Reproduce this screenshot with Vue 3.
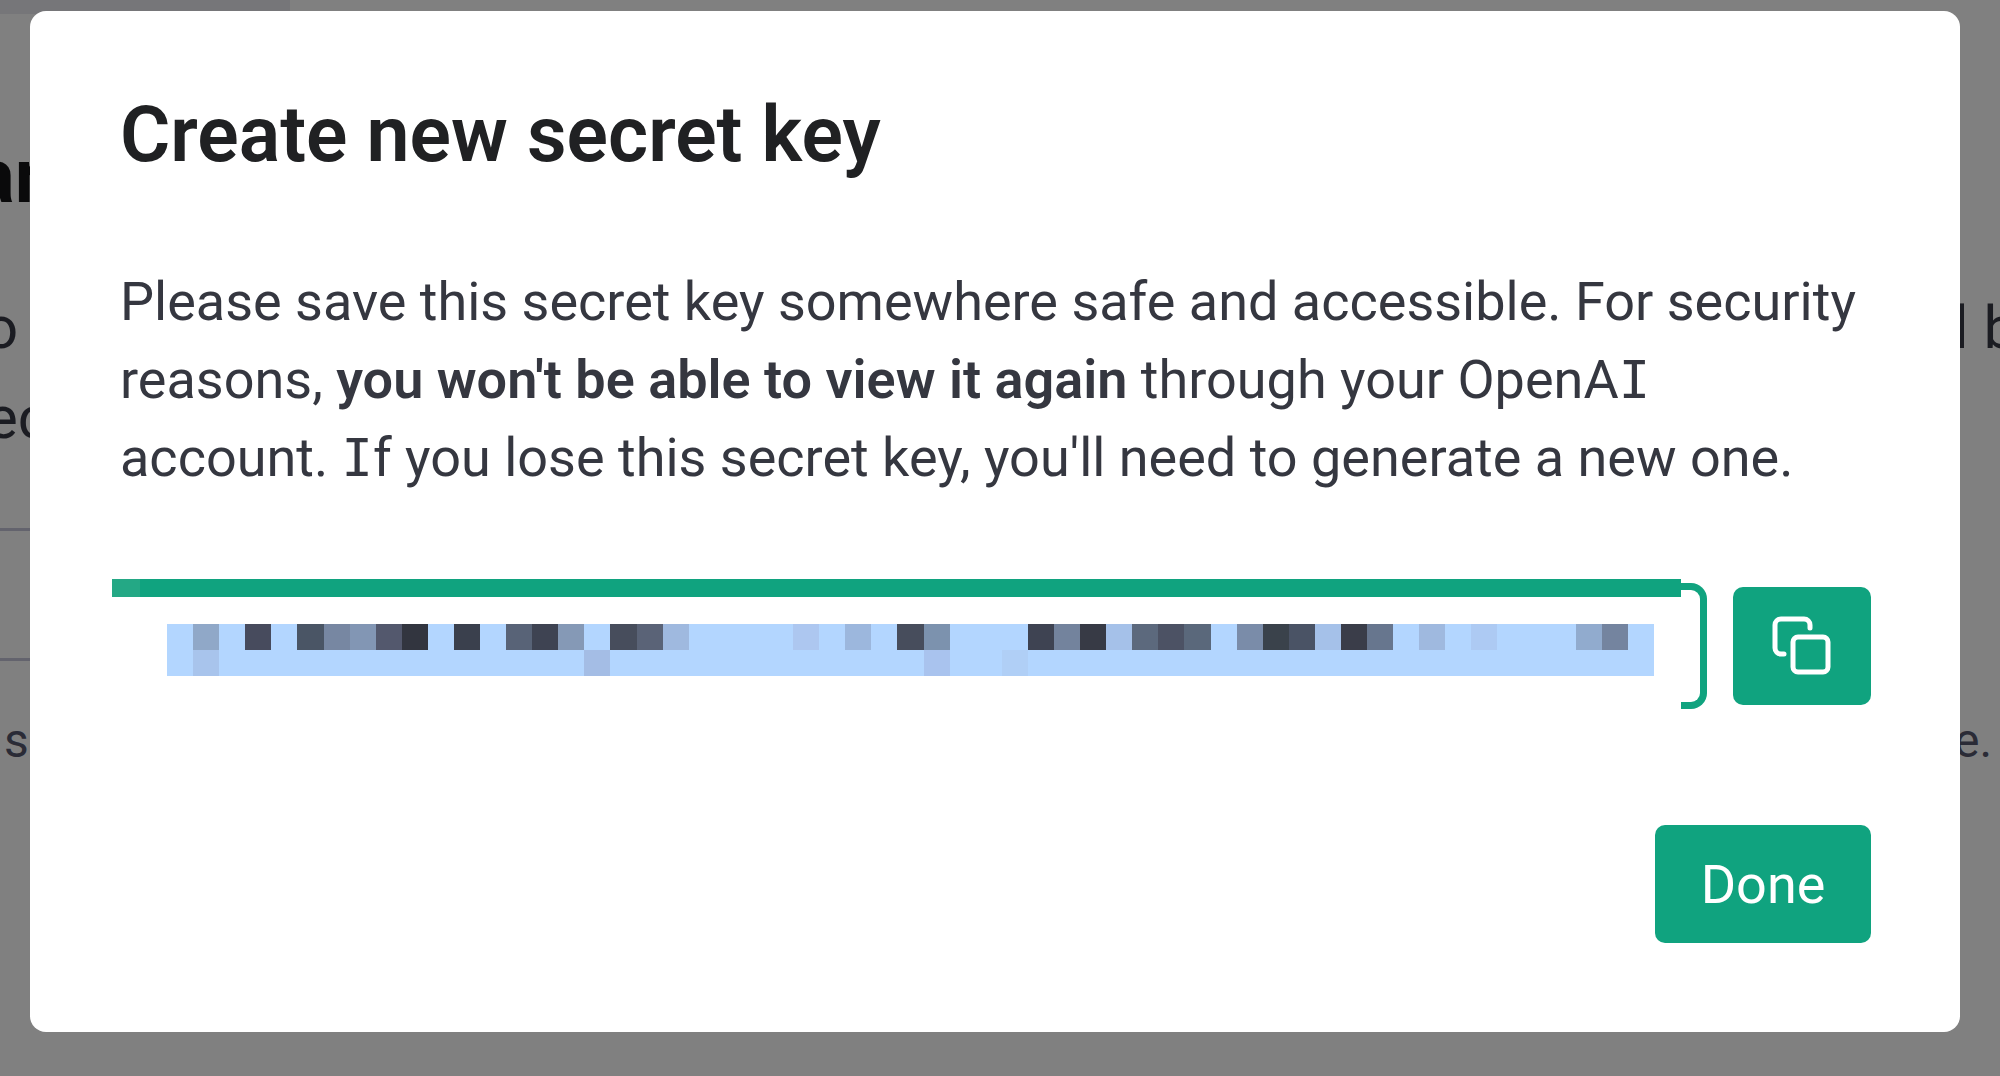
<script setup>
import { ref } from 'vue'

const copied = ref(false)
const open = ref(true)

const columns = 57
const upper = {
  1: '#90a8c8', 3: '#474b5d', 5: '#4a5565', 6: '#7787a2', 7: '#8296b4', 8: '#53586d', 9: '#32353f',
  11: '#3a404d', 13: '#586377', 14: '#3e4352', 15: '#8599b6', 17: '#474d5c', 18: '#5a6377', 19: '#9fb9df',
  24: '#adc7f0', 26: '#9cb7dd', 28: '#474d5c', 29: '#7c92ae', 33: '#3e4352', 34: '#73839d', 35: '#373a45',
  36: '#a5c1e9', 37: '#5c697d', 38: '#4c5264', 39: '#5a687b', 41: '#7a8ca9', 42: '#3a424b', 43: '#4a5365',
  44: '#a5c1e9', 45: '#3a3d49', 46: '#67768e', 48: '#9fb9df', 50: '#adcaf3', 54: '#91abce', 55: '#74849f',
}
const lower = { 1: '#a8c4ec', 16: '#a4bde5', 29: '#a9c3ee', 32: '#b0cff6' }
const tiles = [upper, lower].flatMap((row) =>
  Array.from({ length: columns }, (_, i) => row[i] || '#b3d6ff'),
)
</script>

<template>
  <div class="screen">
    <div class="page" aria-hidden="true">
      <div class="tab"></div>
      <div class="line heading"><span>ar</span></div>
      <div class="line copy first"><span>o</span><span class="end">l b</span></div>
      <div class="line copy second"><span>ec</span></div>
      <div class="table-row"></div>
      <div class="line note"><span>s</span><span class="end">e.</span></div>
    </div>

    <section v-if="open" class="modal" role="dialog" aria-modal="true" aria-labelledby="dialog-title">
      <h1 id="dialog-title">Create new secret key</h1>
      <p>
        Please save this secret key somewhere safe and accessible. For security<br />
        reasons, <strong>you won't be able to view it again</strong> through your OpenA<span class="slab">I</span><br />
        account. <span class="slab">I</span>f you lose this secret key, you'll need to generate a new one.
      </p>
      <div class="key-row">
        <div class="key">
          <div class="key-edge"></div>
          <div class="mosaic">
            <span v-for="(color, i) in tiles" :key="i" :style="{ background: color }"></span>
          </div>
        </div>
        <div class="bracket"></div>
        <button class="copy-button" type="button" aria-label="Copy" :aria-pressed="copied" @click="copied = true">
          <svg viewBox="0 0 60 60" fill="none" stroke="#fff" stroke-width="5" stroke-linecap="round" stroke-linejoin="round">
            <rect x="21" y="21" width="35" height="35" rx="5" />
            <path d="M38 12V9a6 6 0 0 0-6-6H9a6 6 0 0 0-6 6v23a6 6 0 0 0 6 6h3" />
          </svg>
        </button>
      </div>
      <footer>
        <button class="done" type="button" @click="open = false">Done</button>
      </footer>
    </section>
  </div>
</template>

<style>
body {
  margin: 0;
  background: #808080;
}
</style>

<style scoped>
.screen {
  position: relative;
  box-sizing: border-box;
  min-height: 100vh;
  padding: 11px 40px 43px 30px;
  overflow: hidden;
  background: #808080;
  font-family: Roboto, "Liberation Sans", sans-serif;
}
.page {
  position: absolute;
  inset: 0;
  color: #1b1c22;
}
.tab {
  width: 290px;
  height: 14px;
  background: #767679;
}
.line {
  display: flex;
  justify-content: space-between;
  white-space: pre;
}
.heading {
  margin-top: 112px;
  margin-left: -26px;
  font-size: 76px;
  font-weight: 700;
  line-height: 100px;
  color: #0a0a0b;
}
.copy {
  font-size: 60px;
  line-height: 90px;
}
.first {
  margin-top: 57px;
  margin-left: -16px;
}
.second {
  margin-left: -14px;
}
.end {
  width: 46px;
}
.table-row {
  width: 80%;
  height: 127px;
  margin-top: 65px;
  border-top: 3px solid #63636d;
  border-bottom: 3px solid #63636d;
}
.note {
  margin-top: 50px;
  margin-left: 4px;
  font-size: 48px;
  line-height: 60px;
  color: #2a2b36;
}
.modal {
  position: relative;
  box-sizing: border-box;
  padding: 76px 89px 89px 90px;
  border-radius: 16px;
  background: #fff;
}
h1 {
  margin: 0 0 80px;
  font-size: 77px;
  font-weight: 600;
  line-height: 96px;
  color: #202123;
}
p {
  margin: 0 0 82px;
  font-size: 54px;
  line-height: 78px;
  white-space: nowrap;
  color: #353740;
}
strong {
  font-weight: 600;
}
.slab {
  font-family: "DejaVu Sans Mono", monospace;
  font-size: 52px;
  line-height: 1;
}
.key-row {
  display: flex;
  align-items: flex-start;
  height: 130px;
  margin-left: -8px;
}
.key {
  flex: 1;
}
.key-edge {
  height: 18px;
  background: linear-gradient(to right, #24a885 28px, #10a37f 28px);
}
.mosaic {
  display: grid;
  grid-template-columns: repeat(57, 1fr);
  grid-template-rows: 26px 26px;
  margin: 27px 27px 0 55px;
}
.bracket {
  box-sizing: border-box;
  width: 26px;
  height: 126px;
  margin: 4px 26px 0 0;
  border: 7px solid #10a37f;
  border-left: 0;
  border-radius: 0 16px 16px 0;
}
button {
  display: flex;
  align-items: center;
  justify-content: center;
  height: 118px;
  padding: 0;
  border: 0;
  border-radius: 10px;
  background: #10a37f;
  color: #fff;
  font-family: inherit;
  font-size: 54px;
}
.copy-button {
  width: 138px;
  margin-top: 8px;
}
.copy-button svg {
  width: 60px;
  height: 60px;
}
footer {
  display: flex;
  justify-content: flex-end;
  margin-top: 116px;
}
.done {
  width: 216px;
}
</style>
